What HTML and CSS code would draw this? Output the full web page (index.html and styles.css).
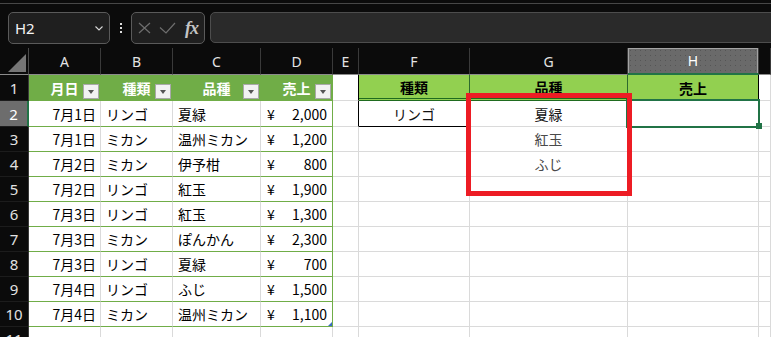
FILE: index.html
```html
<!DOCTYPE html>
<html lang="ja">
<head>
  <meta charset="UTF-8" />
  <meta name="viewport" content="width=device-width, initial-scale=1.0" />
  <title>売上表 - Excel</title>
  <link rel="stylesheet" href="styles.css">
</head>
<body>
  <div class="app">
    <div class="ribbon-edge"></div>

    <!-- Name box + formula bar -->
    <div class="formula-bar">
      <div class="name-box">
        <span>H2</span>
        <svg class="chevron" width="8" height="5" viewBox="0 0 8 5"><path d="M0.5 0.5L4 4L7.5 0.5" fill="none" stroke="#d8d8d8" stroke-width="1.1"/></svg>
      </div>
      <div class="kebab"><i></i><i></i><i></i></div>
      <div class="fx-box">
        <svg width="13" height="12" viewBox="0 0 13 12"><path d="M1 1L12 11M12 1L1 11" stroke="#6e6e6e" stroke-width="1.2"/></svg>
        <svg width="17" height="12" viewBox="0 0 17 12"><path d="M1 5.5L7 11L16 1" fill="none" stroke="#6e6e6e" stroke-width="1.2"/></svg>
        <span class="fx">fx</span>
      </div>
      <div class="formula-input"></div>
    </div>

    <!-- Worksheet -->
    <div class="sheet">
      <div class="row col-heads">
        <div class="corner"><span class="corner-mark"></span></div>
        <div>A</div><div>B</div><div>C</div><div>D</div><div>E</div>
        <div>F</div><div>G</div><div class="picked">H</div><div></div>
      </div>

      <div class="row r1">
        <div class="rh">1</div>
        <div class="th">月日<span class="filter"></span></div>
        <div class="th">種類<span class="filter"></span></div>
        <div class="th">品種<span class="filter"></span></div>
        <div class="th th-last">売上<span class="filter"></span></div>
        <div class="edge"></div>
        <div class="ch">種類</div>
        <div class="ch">品種</div>
        <div class="ch ch-sum">売上</div>
        <div></div>
      </div>

      <div class="row r2">
        <div class="rh rh-picked">2</div>
        <div class="td num">7月1日</div>
        <div class="td">リンゴ</div>
        <div class="td">夏緑</div>
        <div class="td yen td-last"><span>¥</span><span>2,000</span></div>
        <div class="edge"></div>
        <div class="mid crit">リンゴ</div>
        <div class="mid">夏緑</div>
        <div></div>
        <div></div>
      </div>

      <div class="row">
        <div class="rh">3</div>
        <div class="td num">7月1日</div>
        <div class="td">ミカン</div>
        <div class="td">温州ミカン</div>
        <div class="td yen td-last"><span>¥</span><span>1,200</span></div>
        <div></div><div></div>
        <div class="mid spill">紅玉</div>
        <div></div><div></div>
      </div>

      <div class="row">
        <div class="rh">4</div>
        <div class="td num">7月2日</div>
        <div class="td">ミカン</div>
        <div class="td">伊予柑</div>
        <div class="td yen td-last"><span>¥</span><span>800</span></div>
        <div></div><div></div>
        <div class="mid spill">ふじ</div>
        <div></div><div></div>
      </div>

      <div class="row">
        <div class="rh">5</div>
        <div class="td num">7月2日</div>
        <div class="td">リンゴ</div>
        <div class="td">紅玉</div>
        <div class="td yen td-last"><span>¥</span><span>1,900</span></div>
        <div></div><div></div><div></div><div></div><div></div>
      </div>

      <div class="row">
        <div class="rh">6</div>
        <div class="td num">7月3日</div>
        <div class="td">リンゴ</div>
        <div class="td">紅玉</div>
        <div class="td yen td-last"><span>¥</span><span>1,300</span></div>
        <div></div><div></div><div></div><div></div><div></div>
      </div>

      <div class="row">
        <div class="rh">7</div>
        <div class="td num">7月3日</div>
        <div class="td">ミカン</div>
        <div class="td">ぽんかん</div>
        <div class="td yen td-last"><span>¥</span><span>2,300</span></div>
        <div></div><div></div><div></div><div></div><div></div>
      </div>

      <div class="row">
        <div class="rh">8</div>
        <div class="td num">7月3日</div>
        <div class="td">リンゴ</div>
        <div class="td">夏緑</div>
        <div class="td yen td-last"><span>¥</span><span>700</span></div>
        <div></div><div></div><div></div><div></div><div></div>
      </div>

      <div class="row">
        <div class="rh">9</div>
        <div class="td num">7月4日</div>
        <div class="td">リンゴ</div>
        <div class="td">ふじ</div>
        <div class="td yen td-last"><span>¥</span><span>1,500</span></div>
        <div></div><div></div><div></div><div></div><div></div>
      </div>

      <div class="row">
        <div class="rh">10</div>
        <div class="td num">7月4日</div>
        <div class="td">ミカン</div>
        <div class="td">温州ミカン</div>
        <div class="td yen td-last"><span>¥</span><span>1,100</span><i class="resize"></i></div>
        <div></div><div></div><div></div><div></div><div></div>
      </div>

      <div class="row">
        <div class="rh">11</div>
        <div></div><div></div><div></div><div></div><div></div>
        <div></div><div></div><div></div><div></div>
      </div>

      <!-- overlays: active cell and the marker frame -->
      <div class="cursor"><i class="handle"></i></div>
      <div class="red-frame"></div>
    </div>
  </div>
</body>
</html>
```

FILE: styles.css
```css
* {
  box-sizing: border-box;
}

html, body {
  margin: 0;
  padding: 0;
  height: 100%;
  overflow: hidden;
  background-color: #0b0b0b;
}

.ribbon-edge {
  height: 4px;
  border-bottom: 1px solid #474747;
}

/* ---------- formula bar ---------- */

.formula-bar {
  display: flex;
  align-items: center;
  height: 32px;
  margin: 8px 0 4px;
  padding-left: 8px;
}

.name-box {
  width: 102px;
  height: 32px;
  display: flex;
  align-items: center;
  justify-content: space-between;
  padding: 0 6px 0 6px;
  background-color: #1f1f1f;
  border: 1px solid #5a5a5a;
  border-radius: 5px;
  color: #f4f4f4;
  font: 15px "Noto Sans", sans-serif;
}

.kebab {
  width: 21px;
  display: flex;
  flex-direction: column;
  align-items: center;
  gap: 2px;
}

.kebab i {
  width: 2px;
  height: 2px;
  background-color: #dcdcdc;
}

.fx-box {
  width: 74px;
  height: 32px;
  display: flex;
  align-items: center;
  gap: 8px;
  padding-left: 6px;
  background-color: #1f1f1f;
  border: 1px solid #5a5a5a;
  border-radius: 5px;
}

.fx {
  font: italic bold 18px "Liberation Serif", serif;
  color: #c4c4c4;
  letter-spacing: -1px;
  margin-left: 1px;
}

.formula-input {
  flex: 1;
  height: 31px;
  margin: 0 -8px 1px 5px;
  background-color: #2a2a2a;
  border: 1px solid #4d4d4d;
  border-radius: 5px;
}

/* ---------- grid ---------- */

.sheet {
  position: relative;
}

.row {
  display: grid;
  grid-template-columns: 29px 72px 72px 88px 72px 26px 111px 158px 131px 1fr;
  height: 25px;
}

.row.col-heads {
  height: 27px;
}

.row.r1,
.row.r2 {
  height: 26px;
}

.row > div {
  position: relative;
  display: flex;
  align-items: center;
  padding: 0 5px;
  background-color: #fff;
  border-right: 1px solid #dadada;
  border-bottom: 1px solid #dadada;
  font: 14px "Noto Sans CJK JP", sans-serif;
  color: #111;
  white-space: nowrap;
}

.col-heads > div {
  justify-content: center;
  background-color: #0b0b0b;
  color: #e4e4e4;
  font: 14px "Noto Sans", sans-serif;
  border-right: 1px solid #3a3a3a;
  border-bottom: 1px solid #8c8c8c;
}

.col-heads > .corner {
  padding: 0;
  align-items: flex-end;
  justify-content: flex-end;
  border-right-color: #4a4a4a;
}

.corner-mark {
  width: 0;
  height: 0;
  margin: 0 2px 2px 0;
  border-left: 18px solid transparent;
  border-bottom: 18px solid #767676;
}

.col-heads > .picked {
  background-color: #6a6a6a;
  background-image: radial-gradient(#555 0.7px, transparent 0.9px);
  background-size: 5px 5px;
  color: #fff;
  border-bottom: 2px solid #217346;
  box-shadow: inset 1px 1px 0 #a3a3a3, inset -1px 0 0 #a3a3a3;
}

.row > .rh {
  justify-content: center;
  padding: 0;
  background-color: #0b0b0b;
  color: #e2e2e2;
  font: 15px "Noto Sans", sans-serif;
  border-right: 1px solid #3a3a3a;
  border-bottom: 1px solid #1c1c1c;
}

.row > .rh-picked {
  background-color: #6d6d6d;
  color: #fff;
  border-right: 2px solid #217346;
}

/* table A:D */
.row > .th {
  justify-content: center;
  background-color: #70ad47;
  color: #fff;
  font-weight: bold;
  border-right-color: #70ad47;
  border-bottom-color: #70ad47;
}

.filter {
  position: absolute;
  right: 1px;
  top: 9px;
  width: 16px;
  height: 15px;
  background-color: #f2f2f2;
  border: 1px solid #a9a9a9;
}

.filter::after {
  content: "";
  position: absolute;
  left: 4px;
  top: 5px;
  border-left: 3.5px solid transparent;
  border-right: 3.5px solid transparent;
  border-top: 4px solid #555;
}

.row > .td {
  border-bottom-color: #70ad47;
  color: #000;
}

.row > .num {
  justify-content: flex-end;
  padding-right: 4px;
}

.row > .yen {
  justify-content: space-between;
  padding: 0 5px 0 6px;
}

.row > .td-last {
  border-right-color: #70ad47;
}

.resize {
  position: absolute;
  right: 0;
  bottom: 0;
  border-left: 4px solid transparent;
  border-bottom: 4px solid #3a6cc4;
}

/* criteria block F:H */
.row > .edge {
  border-right-color: #000;
}

.row > .ch {
  justify-content: center;
  background-color: #92d050;
  color: #000;
  font-weight: bold;
  border-right-color: #2d6a2d;
  border-bottom: 3px double #1f6b1f;
}

.row > .ch-sum {
  border-right-color: #000;
  border-bottom: 1px solid #217346;
}

.row > .mid {
  justify-content: center;
}

.row > .crit {
  border-bottom-color: #000;
}

.row > .spill {
  color: #4a4a4a;
}

/* active cell H2 */
.cursor {
  position: absolute;
  left: 626px;
  top: 51px;
  width: 134px;
  height: 29px;
  border: 2px solid #217346;
}

.handle {
  position: absolute;
  right: -4px;
  bottom: -3px;
  width: 6px;
  height: 6px;
  background-color: #217346;
}

.red-frame {
  position: absolute;
  left: 466px;
  top: 45px;
  width: 166px;
  height: 103px;
  border: 5px solid #ed1c24;
}
```
